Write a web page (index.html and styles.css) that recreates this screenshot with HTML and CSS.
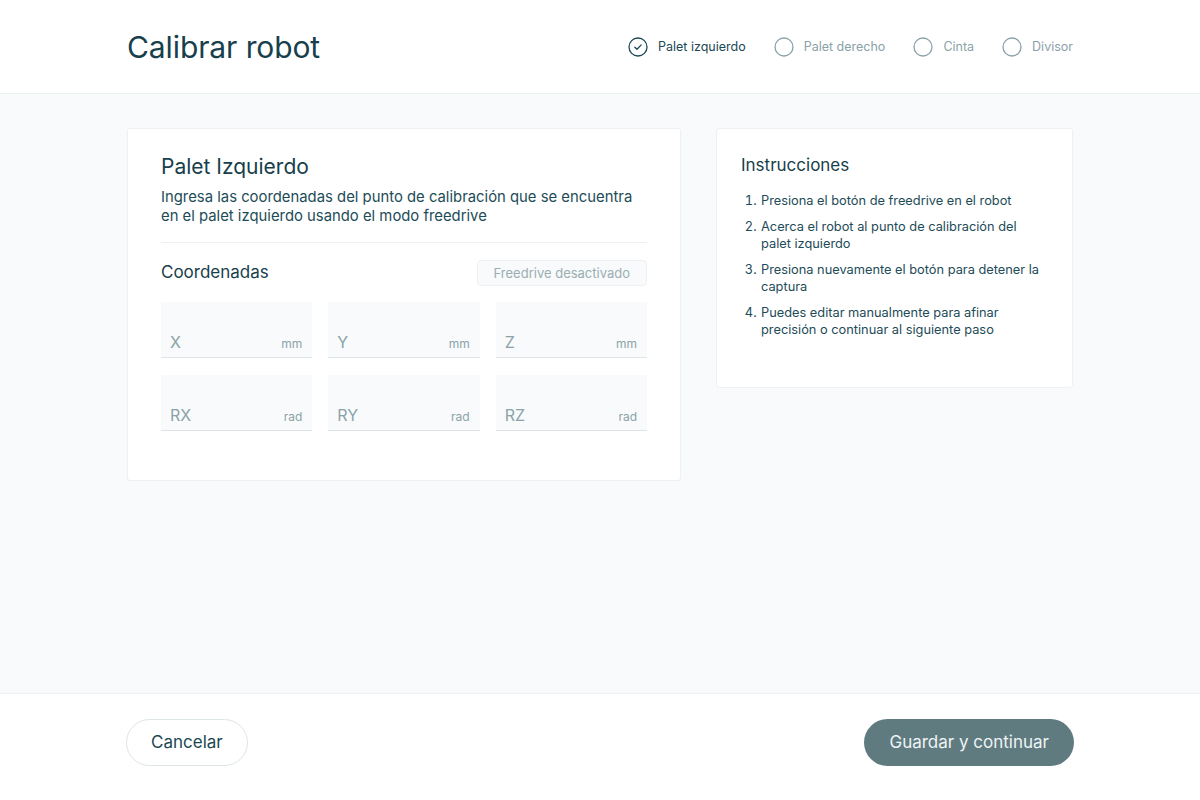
FILE: index.html
```html
<!DOCTYPE html>
<html lang="es">
<head>
<meta charset="utf-8">
<title>Calibrar robot</title>
<link rel="stylesheet" href="styles.css">
</head>
<body>
<div class="page">
  <header class="header">
    <div class="wrap header-inner">
      <h1 class="title">Calibrar robot</h1>
      <nav class="steps">
        <div class="step active">
          <svg class="step-icon" viewBox="0 0 20 20" width="20" height="20"><circle cx="10" cy="10" r="9" fill="none" stroke="currentColor" stroke-width="1.3"/><path d="M6.8 10.2 L9 12.3 L13.2 7.9" fill="none" stroke="currentColor" stroke-width="1.3" stroke-linecap="round" stroke-linejoin="round"/></svg>
          <span>Palet izquierdo</span>
        </div>
        <div class="step">
          <svg class="step-icon" viewBox="0 0 20 20" width="20" height="20"><circle cx="10" cy="10" r="9" fill="none" stroke="currentColor" stroke-width="1.3"/></svg>
          <span>Palet derecho</span>
        </div>
        <div class="step">
          <svg class="step-icon" viewBox="0 0 20 20" width="20" height="20"><circle cx="10" cy="10" r="9" fill="none" stroke="currentColor" stroke-width="1.3"/></svg>
          <span>Cinta</span>
        </div>
        <div class="step">
          <svg class="step-icon" viewBox="0 0 20 20" width="20" height="20"><circle cx="10" cy="10" r="9" fill="none" stroke="currentColor" stroke-width="1.3"/></svg>
          <span>Divisor</span>
        </div>
      </nav>
    </div>
  </header>

  <main class="main">
    <div class="wrap content">
      <section class="card card-form">
        <h2 class="card-title">Palet Izquierdo</h2>
        <p class="card-desc">Ingresa las coordenadas del punto de calibración que se encuentra en el palet izquierdo usando el modo freedrive</p>
        <div class="divider"></div>
        <div class="coords-head">
          <h3 class="coords-title">Coordenadas</h3>
          <span class="badge">Freedrive desactivado</span>
        </div>
        <div class="fields">
          <div class="field"><span class="field-label">X</span><span class="field-unit">mm</span></div>
          <div class="field"><span class="field-label">Y</span><span class="field-unit">mm</span></div>
          <div class="field"><span class="field-label">Z</span><span class="field-unit">mm</span></div>
          <div class="field"><span class="field-label">RX</span><span class="field-unit">rad</span></div>
          <div class="field"><span class="field-label">RY</span><span class="field-unit">rad</span></div>
          <div class="field"><span class="field-label">RZ</span><span class="field-unit">rad</span></div>
        </div>
      </section>

      <aside class="card card-help">
        <h2 class="help-title">Instrucciones</h2>
        <ol class="help-list">
          <li>Presiona el botón de freedrive en el robot</li>
          <li>Acerca el robot al punto de calibración del palet izquierdo</li>
          <li>Presiona nuevamente el botón para detener la captura</li>
          <li>Puedes editar manualmente para afinar precisión o continuar al siguiente paso</li>
        </ol>
      </aside>
    </div>
  </main>

  <footer class="footer">
    <div class="wrap footer-inner">
      <button class="btn btn-outline" type="button">Cancelar</button>
      <button class="btn btn-primary" type="button">Guardar y continuar</button>
    </div>
  </footer>
</div>
</body>
</html>
```

FILE: styles.css
```css
* { box-sizing: border-box; }
html, body { margin: 0; padding: 0; }
body {
  font-family: Inter, "Noto Sans", sans-serif;
  color: #1b4853;
  background: #f8fafb;
}
.page {
  display: flex;
  flex-direction: column;
  height: 100vh;
}
.wrap {
  width: 946px;
  margin: 0 auto;
}
.header {
  background: #fff;
  border-bottom: 1px solid #eef1f2;
  height: 94px;
  flex: none;
}
.header-inner {
  height: 100%;
  display: flex;
  align-items: center;
  justify-content: space-between;
}
.title {
  margin: 0;
  font-size: 30px;
  font-weight: 400;
  color: #17404c;
  letter-spacing: -0.1px;
}
.steps {
  display: flex;
  align-items: center;
  gap: 28px;
}
.step {
  display: flex;
  align-items: center;
  gap: 10px;
  font-size: 12.5px;
  color: #8ba2a8;
}
.step.active { color: #1b4853; }
.step-icon { display: block; }
.main {
  flex: 1;
  padding-top: 34px;
}
.content {
  display: flex;
  align-items: flex-start;
  gap: 35px;
}
.card {
  background: #fff;
  border: 1px solid #eef1f3;
  border-radius: 3px;
}
.card-form {
  width: 554px;
  padding: 25px 33px 49px;
}
.card-title {
  margin: 0;
  font-size: 21px;
  font-weight: 400;
  color: #17404c;
  line-height: 26px;
}
.card-desc {
  margin: 8px 0 0;
  font-size: 14.85px;
  line-height: 19px;
  color: #1d4b57;
}
.divider {
  height: 1px;
  background: #eef1f3;
  margin-top: 16px;
}
.coords-head {
  display: flex;
  align-items: center;
  justify-content: space-between;
  margin-top: 17px;
}
.coords-title {
  margin: 0;
  font-size: 17px;
  font-weight: 400;
  color: #17404c;
  position: relative;
  top: -1px;
}
.badge {
  font-size: 13px;
  color: #9aaeb3;
  background: #f8fafb;
  border: 1px solid #edf1f2;
  border-radius: 4px;
  padding: 4px 16px;
  line-height: 16px;
}
.fields {
  display: grid;
  grid-template-columns: repeat(3, 1fr);
  column-gap: 16px;
  row-gap: 17px;
  margin-top: 16px;
}
.field {
  height: 56px;
  background: #f8fafb;
  border-bottom: 1.5px solid #dde5e7;
  display: flex;
  align-items: flex-end;
  justify-content: space-between;
  padding: 0 10px 5px 9px;
}
.field-label {
  font-size: 16px;
  color: #8ba2a8;
  line-height: 20px;
}
.field-unit {
  font-size: 12px;
  color: #8ba2a8;
  line-height: 16px;
}
.card-help {
  width: 357px;
  padding: 24px 24px 49px;
}
.help-title {
  margin: 0;
  font-size: 17px;
  font-weight: 400;
  color: #17404c;
  line-height: 24px;
}
.help-list {
  margin: 15px 0 0;
  padding-left: 19px;
  font-size: 12.8px;
  line-height: 17px;
  color: #1d4b57;
}
.help-list li { padding-left: 1px; }
.help-list li + li { margin-top: 9px; }
.footer {
  background: #fff;
  border-top: 1px solid #eef1f2;
  height: 107px;
  flex: none;
}
.footer-inner {
  height: 100%;
  display: flex;
  align-items: center;
  justify-content: space-between;
  padding-bottom: 10px;
}
.btn {
  font-family: Inter, "Noto Sans", sans-serif;
  font-size: 17px;
  height: 47px;
  border-radius: 24px;
  cursor: pointer;
}
.btn-outline {
  background: #fff;
  color: #1b4853;
  border: 1px solid #dde5e6;
  padding: 0 24px;
  margin-left: -1px;
}
.btn-primary {
  background: #5f7b80;
  color: #eef3f4;
  border: none;
  padding: 0 25px;
  margin-right: -1px;
}
```
